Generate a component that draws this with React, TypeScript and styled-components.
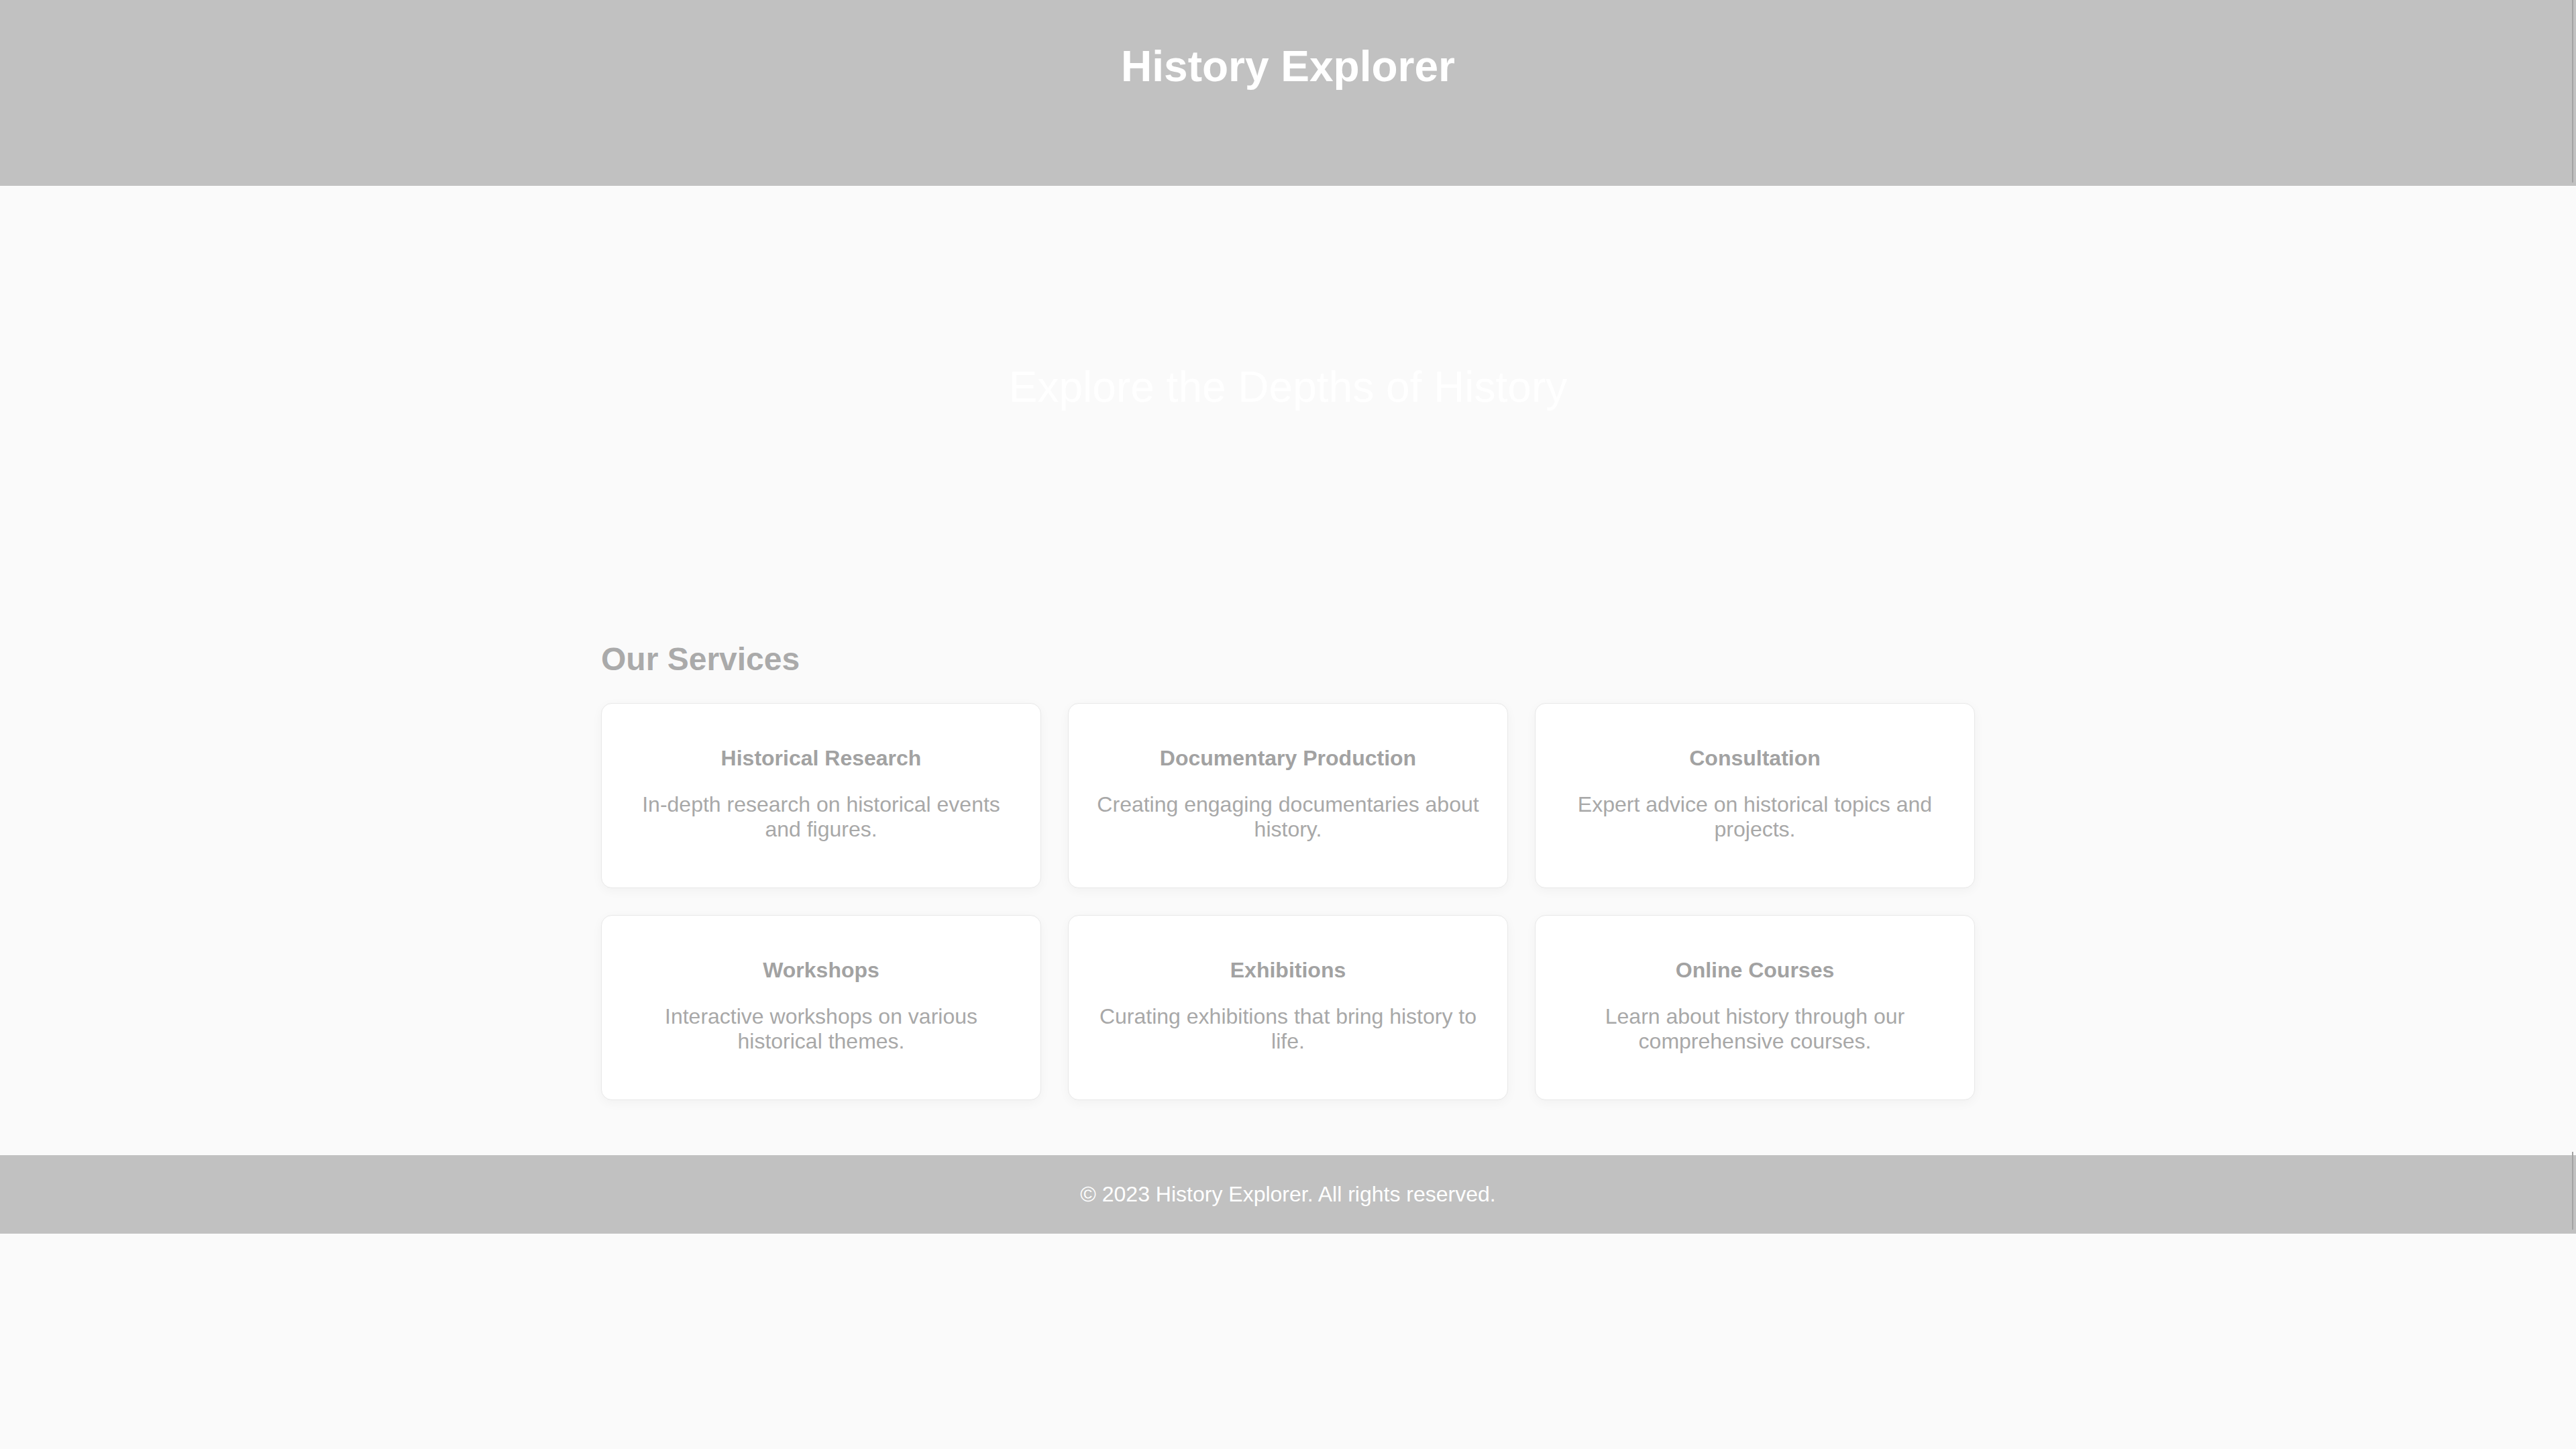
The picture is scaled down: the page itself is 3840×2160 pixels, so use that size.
import React from 'react'
import styled, { createGlobalStyle } from 'styled-components'

const GlobalStyle = createGlobalStyle`
    body {
        margin: 0;
        background-color: #fafafa;
        font-family: "Liberation Sans", Arial, sans-serif;
    }
`

const Header = styled.header`
    position: relative;
    box-sizing: border-box;
    height: 277px;
    padding-top: 62px;
    background-color: #c1c1c1;
    text-align: center;

    &::after {
        content: '';
        position: absolute;
        top: 0;
        bottom: 5px;
        right: 4px;
        width: 2px;
        background-color: #a3a3a3;
    }
`

const SiteTitle = styled.h1`
    margin: 0;
    font-size: 64px;
    font-weight: bold;
    color: #ffffff;
`

const Hero = styled.section`
    padding: 263px 0;
    text-align: center;
`

const HeroTitle = styled.h2`
    margin: 0;
    font-size: 64px;
    font-weight: normal;
    color: #ffffff;
`

const Services = styled.section`
    width: 2048px;
    margin: 0 auto;
    padding: 38px 0 82px;
`

const SectionTitle = styled.h2`
    margin: 40px 0 38px;
    font-size: 48px;
    font-weight: bold;
    color: #aaaaaa;
`

const ServiceGrid = styled.div`
    display: grid;
    grid-template-columns: repeat(3, 1fr);
    gap: 40px;
`

const ServiceCard = styled.div`
    padding: 32px 32px 36px;
    background-color: #ffffff;
    border: 1px solid #e8e8e8;
    border-radius: 16px;
    box-shadow: 0 4px 16px rgba(0, 0, 0, 0.04);
    text-align: center;
`

const ServiceName = styled.h3`
    margin: 31px 0 32px;
    font-size: 32px;
    font-weight: bold;
    color: #a2a2a2;
`

const ServiceText = styled.p`
    margin: 32px 0;
    font-size: 32px;
    color: #a8a8a8;
`

const Footer = styled.footer`
    position: relative;
    padding: 40px 0;
    background-color: #c1c1c1;
    text-align: center;
    font-size: 32px;
    color: #ffffff;

    &::after {
        content: '';
        position: absolute;
        top: -5px;
        bottom: 6px;
        right: 4px;
        width: 2px;
        background-color: #a3a3a3;
    }
`

const services = [
    { name: 'Historical Research', text: 'In-depth research on historical events and figures.' },
    { name: 'Documentary Production', text: 'Creating engaging documentaries about history.' },
    { name: 'Consultation', text: 'Expert advice on historical topics and projects.' },
    { name: 'Workshops', text: 'Interactive workshops on various historical themes.' },
    { name: 'Exhibitions', text: 'Curating exhibitions that bring history to life.' },
    { name: 'Online Courses', text: 'Learn about history through our comprehensive courses.' },
]

const App = () => {
    return (
        <>
            <GlobalStyle />
            <Header>
                <SiteTitle>History Explorer</SiteTitle>
            </Header>
            <Hero>
                <HeroTitle>Explore the Depths of History</HeroTitle>
            </Hero>
            <Services>
                <SectionTitle>Our Services</SectionTitle>
                <ServiceGrid>
                    {services.map((s) => (
                        <ServiceCard key={s.name}>
                            <ServiceName>{s.name}</ServiceName>
                            <ServiceText>{s.text}</ServiceText>
                        </ServiceCard>
                    ))}
                </ServiceGrid>
            </Services>
            <Footer>© 2023 History Explorer. All rights reserved.</Footer>
        </>
    )
}

export default App
